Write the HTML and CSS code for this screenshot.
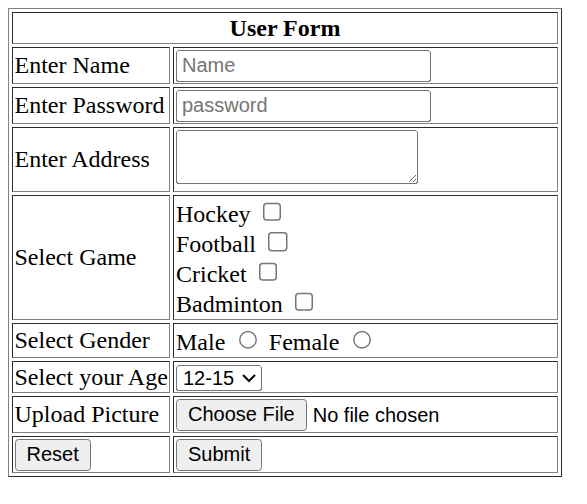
FILE: index.html
```html
<!DOCTYPE html>
<html>
<head>
<meta charset="utf-8">
<title>User Form</title>
<link rel="stylesheet" href="styles.css">
</head>
<body>
<form class="user-form">
<table class="form-table" border="1">
  <tr><th colspan="2">User Form</th></tr>
  <tr><td>Enter Name</td><td><input class="text-field" type="text" placeholder="Name"></td></tr>
  <tr><td>Enter Password</td><td><input class="text-field" type="password" placeholder="password"></td></tr>
  <tr><td>Enter Address</td><td><textarea class="address"></textarea></td></tr>
  <tr><td>Select Game</td><td>Hockey <input type="checkbox"><br>Football <input type="checkbox"><br>Cricket <input type="checkbox"><br>Badminton <input type="checkbox"></td></tr>
  <tr><td>Select Gender</td><td>Male <input type="radio" name="g"> Female <input type="radio" name="g"></td></tr>
  <tr><td>Select your Age</td><td><select class="age"><option>12-15</option><option>16-20</option></select></td></tr>
  <tr><td>Upload Picture</td><td><input type="file"></td></tr>
  <tr><td><input type="reset" value="Reset"></td><td><input type="submit" value="Submit"></td></tr>
</table>
</form>
</body>
</html>
```

FILE: styles.css
```css
body {
  margin: 8px;
  font-family: "Liberation Serif", serif;
}
.user-form {
  margin: 0;
}
.form-table {
  zoom: 1.5;
  width: 369.333px;
}
.form-table input,
.form-table select,
.form-table textarea,
.form-table button {
  font-family: "Liberation Sans", Arial, sans-serif;
}
.form-table .text-field {
  box-sizing: border-box;
  width: 170px;
}
.form-table .address {
  box-sizing: border-box;
  width: 161.333px;
  height: 36px;
  font-family: "Liberation Mono", monospace;
}
.form-table .age {
  box-sizing: border-box;
  width: 57.333px;
}
```
